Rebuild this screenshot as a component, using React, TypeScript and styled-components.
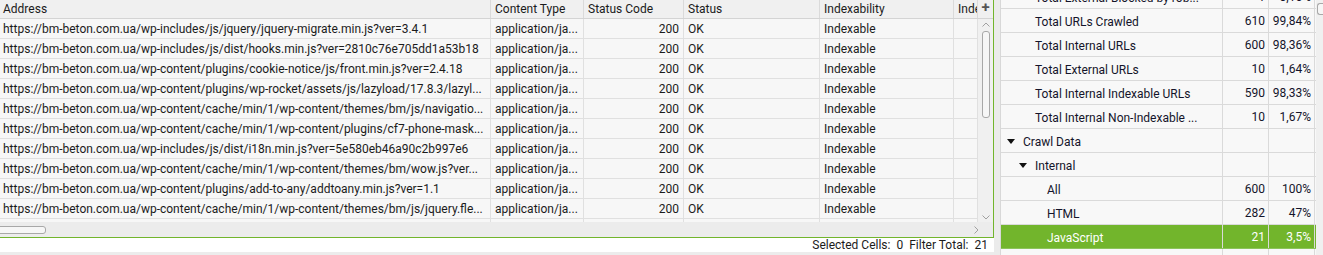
import React from "react";
import styled, { createGlobalStyle } from "styled-components";

const GlobalStyle = createGlobalStyle`
	html, body {
		margin: 0;
		padding: 0;
		background: #ececec;
		font-family: Roboto, "Liberation Sans", sans-serif;
		font-size: 12px;
		color: #1b1b1b;
	}
`;

const GREEN = "#72b52c";
const COLS = "491px 93px 100px 136px 134px 1fr";

const urls = [
	"https://bm-beton.com.ua/wp-includes/js/jquery/jquery-migrate.min.js?ver=3.4.1",
	"https://bm-beton.com.ua/wp-includes/js/dist/hooks.min.js?ver=2810c76e705dd1a53b18",
	"https://bm-beton.com.ua/wp-content/plugins/cookie-notice/js/front.min.js?ver=2.4.18",
	"https://bm-beton.com.ua/wp-content/plugins/wp-rocket/assets/js/lazyload/17.8.3/lazyl...",
	"https://bm-beton.com.ua/wp-content/cache/min/1/wp-content/themes/bm/js/navigatio...",
	"https://bm-beton.com.ua/wp-content/cache/min/1/wp-content/plugins/cf7-phone-mask...",
	"https://bm-beton.com.ua/wp-includes/js/dist/i18n.min.js?ver=5e580eb46a90c2b997e6",
	"https://bm-beton.com.ua/wp-content/cache/min/1/wp-content/themes/bm/wow.js?ver...",
	"https://bm-beton.com.ua/wp-content/plugins/add-to-any/addtoany.min.js?ver=1.1",
	"https://bm-beton.com.ua/wp-content/cache/min/1/wp-content/themes/bm/js/jquery.fle...",
];

type TreeRow = {
	label: string;
	level: number;
	parent?: boolean;
	count?: string;
	pct?: string;
	active?: boolean;
};

const tree: TreeRow[] = [
	{ label: "Total External Blocked by rob...", level: 1, count: "1", pct: "0,16%" },
	{ label: "Total URLs Crawled", level: 1, count: "610", pct: "99,84%" },
	{ label: "Total Internal URLs", level: 1, count: "600", pct: "98,36%" },
	{ label: "Total External URLs", level: 1, count: "10", pct: "1,64%" },
	{ label: "Total Internal Indexable URLs", level: 1, count: "590", pct: "98,33%" },
	{ label: "Total Internal Non-Indexable ...", level: 1, count: "10", pct: "1,67%" },
	{ label: "Crawl Data", level: 0, parent: true },
	{ label: "Internal", level: 1, parent: true },
	{ label: "All", level: 2, count: "600", pct: "100%" },
	{ label: "HTML", level: 2, count: "282", pct: "47%" },
	{ label: "JavaScript", level: 2, count: "21", pct: "3,5%", active: true },
	{ label: "", level: 2 },
];

export default function App() {
	return (
		<>
			<GlobalStyle />
			<Page>
				<LeftPane>
					<TablePanel>
						<TableBody>
							<TableArea>
								<HeaderRow>
									<HeadCell>Address</HeadCell>
									<HeadCell>Content Type</HeadCell>
									<HeadCell>Status Code</HeadCell>
									<HeadCell>Status</HeadCell>
									<HeadCell>Indexability</HeadCell>
									<HeadCell>Inde</HeadCell>
								</HeaderRow>
								{urls.map((url) => (
									<DataRow key={url}>
										<Cell>{url}</Cell>
										<Cell>application/ja...</Cell>
										<Cell $right>200</Cell>
										<Cell>OK</Cell>
										<Cell>Indexable</Cell>
										<Cell />
									</DataRow>
								))}
								<DataRow>
									<Cell />
									<Cell />
									<Cell />
									<Cell />
									<Cell />
									<Cell />
								</DataRow>
							</TableArea>
							<VScroll>
								<PlusCell>+</PlusCell>
								<VTrack>
									<Chevron viewBox="0 0 8 5">
										<polyline points="0.5,4.5 4,1 7.5,4.5" />
									</Chevron>
									<VThumb />
									<Spacer />
									<Chevron viewBox="0 0 8 5">
										<polyline points="0.5,0.5 4,4 7.5,0.5" />
									</Chevron>
								</VTrack>
							</VScroll>
						</TableBody>
						<HScroll>
							<HThumb />
							<Spacer />
							<SideChevron viewBox="0 0 5 8">
								<polyline points="0.5,0.5 4,4 0.5,7.5" />
							</SideChevron>
						</HScroll>
					</TablePanel>
					<StatusBar>
						<StatusLabel>Selected Cells:</StatusLabel>
						<StatusValue>0</StatusValue>
						<StatusLabel>Filter Total:</StatusLabel>
						<StatusValue>21</StatusValue>
					</StatusBar>
				</LeftPane>
				<Divider />
				<RightPane>
					<TreeViewport>
						<TreeList>
							{tree.map((row, i) => (
								<TreeLine key={i} $active={row.active}>
									<NameCell $level={row.level} $parent={row.parent}>
										{row.parent && <Triangle />}
										{row.label}
									</NameCell>
									<NumCell>{row.count}</NumCell>
									<NumCell>{row.pct}</NumCell>
								</TreeLine>
							))}
						</TreeList>
					</TreeViewport>
					<RightScroll>
						<RightThumb />
					</RightScroll>
				</RightPane>
			</Page>
		</>
	);
}

const Page = styled.div`
	display: flex;
	width: 1323px;
	height: 255px;
	overflow: hidden;
`;

const LeftPane = styled.div`
	width: 994px;
	display: flex;
	flex-direction: column;
	flex-shrink: 0;
`;

const TablePanel = styled.div`
	height: 238px;
	box-sizing: border-box;
	display: flex;
	flex-direction: column;
	border-right: 1px solid ${GREEN};
	border-bottom: 1px solid ${GREEN};
	background: #f4f4f4;
`;

const TableBody = styled.div`
	flex: 1;
	display: flex;
	min-height: 0;
`;

const TableArea = styled.div`
	flex: 1;
	overflow: hidden;
	background: #f7f7f7;
`;

const HeaderRow = styled.div`
	display: grid;
	grid-template-columns: ${COLS};
	height: 19px;
	box-sizing: border-box;
	background: #f0f0f0;
	border-bottom: 1px solid #d4d4d4;
`;

const HeadCell = styled.div`
	padding: 1px 0 0 4px;
	line-height: 17px;
	white-space: nowrap;
	overflow: hidden;
	border-right: 1px solid #dadada;
	color: #1b1b1b;

	&:first-child {
		padding-left: 3px;
	}
`;

const DataRow = styled.div`
	display: grid;
	grid-template-columns: ${COLS};
	height: 20px;
	box-sizing: border-box;
	border-bottom: 1px solid #e0e0e0;
`;

const Cell = styled.div<{ $right?: boolean }>`
	padding: 1px 4px 0 ${(p) => (p.$right ? "0" : "4px")};
	text-align: ${(p) => (p.$right ? "right" : "left")};
	line-height: 18px;
	white-space: nowrap;
	overflow: hidden;
	border-right: 1px solid #e0e0e0;

	&:first-child {
		padding-left: 3px;
	}
`;

const VScroll = styled.div`
	width: 15px;
	display: flex;
	flex-direction: column;
	background: #f0f0f0;
`;

const PlusCell = styled.div`
	height: 19px;
	box-sizing: border-box;
	border-bottom: 1px solid #d4d4d4;
	text-align: center;
	font-size: 15px;
	font-weight: bold;
	line-height: 15px;
	color: #555;
`;

const VTrack = styled.div`
	flex: 1;
	display: flex;
	flex-direction: column;
	align-items: center;
	padding: 3px 0 2px;
`;

const Chevron = styled.svg`
	width: 8px;
	height: 5px;
	fill: none;
	stroke: #a0a0a0;
	stroke-width: 1;
	flex-shrink: 0;
`;

const SideChevron = styled.svg`
	width: 5px;
	height: 8px;
	fill: none;
	stroke: #a0a0a0;
	stroke-width: 1;
	flex-shrink: 0;
	margin-right: 14px;
`;

const VThumb = styled.div`
	margin-top: 4px;
	width: 8px;
	height: 87px;
	box-sizing: border-box;
	border: 1px solid #a8a8a8;
	border-radius: 3px;
	background: #f6f6f6;
`;

const Spacer = styled.div`
	flex: 1;
`;

const HScroll = styled.div`
	height: 15px;
	display: flex;
	align-items: center;
	background: #ececec;
`;

const HThumb = styled.div`
	width: 50px;
	height: 8px;
	margin-left: -4px;
	box-sizing: border-box;
	border: 1px solid #a8a8a8;
	border-radius: 3px;
	background: #f6f6f6;
`;

const StatusBar = styled.div`
	height: 14px;
	background: #ffffff;
	display: flex;
	justify-content: flex-end;
	align-items: center;
	padding-right: 6px;
	font-size: 12px;
	color: #1b1b1b;
`;

const StatusLabel = styled.span`
	margin-right: 6px;
`;

const StatusValue = styled.span`
	& + ${StatusLabel} {
		margin-left: 6px;
	}
`;

const Divider = styled.div`
	width: 6px;
	flex-shrink: 0;
	background: #ebebeb;
`;

const RightPane = styled.div`
	flex: 1;
	display: flex;
	border-left: 1px solid #d8d8d8;
	background: #f8f8f8;
`;

const TreeViewport = styled.div`
	width: 315px;
	overflow: hidden;
`;

const TreeList = styled.div`
	margin-top: -15px;
`;

const TreeLine = styled.div<{ $active?: boolean }>`
	display: grid;
	grid-template-columns: 222px 46px 46px;
	height: 24px;
	box-sizing: border-box;
	border-bottom: 1px solid ${(p) => (p.$active ? "#8cc45a" : "#dadada")};
	background: ${(p) => (p.$active ? GREEN : "#f8f8f8")};
	color: ${(p) => (p.$active ? "#ffffff" : "#14142a")};
	font-size: 12px;
`;

const NameCell = styled.div<{ $level: number; $parent?: boolean }>`
	display: flex;
	align-items: center;
	padding: 2px 0 0 ${(p) => (p.$parent ? 6 + p.$level * 12 : 22 + p.$level * 12)}px;
	white-space: nowrap;
	overflow: hidden;
	border-right: 1px solid #dadada;
`;

const Triangle = styled.span`
	width: 0;
	height: 0;
	border-left: 4px solid transparent;
	border-right: 4px solid transparent;
	border-top: 5px solid #111;
	margin: -1px 8px 0 0;
`;

const NumCell = styled.div`
	text-align: right;
	padding: 2px 3px 0 0;
	line-height: 21px;
	border-right: 1px solid #dadada;
	white-space: nowrap;
`;

const RightScroll = styled.div`
	flex: 1;
	background: #f0f0f0;
	display: flex;
	justify-content: flex-end;
`;

const RightThumb = styled.div`
	width: 6px;
	height: 12px;
	margin-top: 3px;
	box-sizing: border-box;
	border: 1px solid #a8a8a8;
	border-right: none;
	border-radius: 3px 0 0 3px;
	background: #f6f6f6;
`;
